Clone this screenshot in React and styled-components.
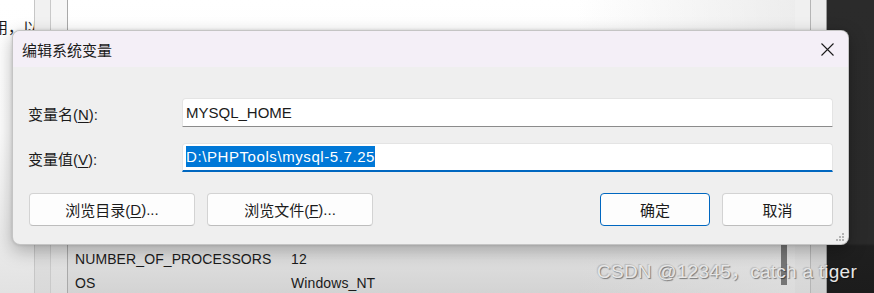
import React from 'react';
import styled, { createGlobalStyle } from 'styled-components';

const GlobalStyle = createGlobalStyle`
  html, body {
    margin: 0;
    padding: 0;
  }
  body {
    width: 874px;
    height: 293px;
    overflow: hidden;
    background: #2b2b2b;
    font-family: "Liberation Sans", "Noto Sans CJK SC", sans-serif;
    color: #1b1b1b;
  }
`;

const Screen = styled.div`
  position: relative;
  width: 874px;
  height: 293px;
  display: flex;
  overflow: hidden;
`;

/* ---- window behind the dialog ---- */

const SidePane = styled.div`
  width: 35px;
  flex: none;
  overflow: hidden;
  border-right: 1px solid #c6c6c6;
  background: linear-gradient(#ffffff 0, #fdfdfd 45%, #e2e2e2 100%);
  padding-top: 19px;
  box-sizing: border-box;
`;

const CutText = styled.div`
  margin-left: -7px;
  font-size: 15px;
  line-height: 18px;
  white-space: nowrap;
`;

const Strip = styled.div`
  width: ${p => p.$w}px;
  flex: none;
  box-sizing: border-box;
  border-right: 1px solid ${p => p.$line};
  background: linear-gradient(${p => p.$top} 0, ${p => p.$top} 40%, ${p => p.$bottom} 100%);
`;

const Main = styled.div`
  flex: 1;
  display: flex;
  background:
    linear-gradient(to right, rgba(255,255,255,0) 70%, rgba(225,225,225,0.6) 100%),
    linear-gradient(#ffffff 0, #fafafa 45%, #e6e6e6 80%, #d3d3d3 100%);
`;

const List = styled.div`
  flex: 1;
  padding: 223px 0 0 7px;
  font-size: 14px;
  letter-spacing: 0.1px;
`;

const Row = styled.div`
  display: flex;
  height: 24px;
  align-items: center;
  white-space: nowrap;
`;

const Name = styled.span`
  width: 216px;
  flex: none;
`;

const Track = styled.div`
  width: 14px;
  flex: none;
  display: flex;
  justify-content: flex-start;
`;

const Thumb = styled.div`
  width: 6px;
  height: 40px;
  margin-top: 245px;
  background: #767676;
`;

const Desktop = styled.div`
  width: 47px;
  flex: none;
  background: linear-gradient(#2b2b2b 0, #2a2a2a 83%, #1f1f1f 84%, #1c1c1c 100%);
`;

/* ---- dialog ---- */

const Dialog = styled.div`
  position: absolute;
  left: 12px;
  top: 30px;
  width: 837px;
  height: 215px;
  box-sizing: border-box;
  border-radius: 8px;
  overflow: hidden;
  background: #efefef;
  border: 1px solid rgba(0, 0, 0, 0.18);
  box-shadow: 0 6px 18px rgba(0, 0, 0, 0.28), 0 0 3px rgba(0, 0, 0, 0.15);
  display: flex;
  flex-direction: column;
`;

const TitleBar = styled.div`
  height: 36px;
  flex: none;
  display: flex;
  align-items: center;
  justify-content: space-between;
  padding: 0 14px 0 9px;
  background: #f4eff7;
  font-size: 15px;
`;

const CloseButton = styled.div`
  width: 14px;
  height: 14px;
  display: flex;
  align-items: center;
  justify-content: center;
`;

const Body = styled.div`
  flex: 1;
  padding: 31px 15px 0 15px;
`;

const Form = styled.div`
  display: grid;
  grid-template-columns: 154px 1fr;
  row-gap: 16px;
  align-items: center;
`;

const Label = styled.label`
  font-size: 15px;
  padding-top: 1px;
`;

const Key = styled.span`
  text-decoration: underline;
  text-underline-offset: 2px;
`;

const Field = styled.div`
  height: 29px;
  box-sizing: border-box;
  display: flex;
  align-items: center;
  padding: 0 3px;
  background: #ffffff;
  border: 1px solid #e4e4e4;
  border-bottom: ${p => (p.$focused ? '2px solid #0067c0' : '1px solid #8b8b8b')};
  border-radius: 4px 4px 0 0;
  font-size: 15px;
  white-space: nowrap;
`;

const Selected = styled.span`
  display: inline-block;
  height: 21px;
  line-height: 21px;
  margin-bottom: 1px;
  letter-spacing: 0.58px;
  background: #0078d7;
  color: #ffffff;
`;

const Buttons = styled.div`
  display: flex;
  gap: 12px;
  margin-top: 21px;
  padding-left: 1px;
`;

const Button = styled.div`
  width: ${p => p.$w}px;
  height: 33px;
  box-sizing: border-box;
  display: flex;
  align-items: center;
  justify-content: center;
  font-size: 15px;
  background: #fdfdfd;
  border: 1px solid ${p => (p.$primary ? '#0067c0' : '#d3d3d3')};
  border-bottom-color: ${p => (p.$primary ? '#0067c0' : '#bdbdbd')};
  border-radius: 4px;
  margin-left: ${p => (p.$push ? 'auto' : '0')};
`;

const Grip = styled.svg`
  position: absolute;
  right: 3px;
  bottom: 2px;
`;

const Watermark = styled.div`
  position: absolute;
  left: 597px;
  top: 261px;
  font-size: 19px;
  line-height: 22px;
  letter-spacing: 0.25px;
  color: #e6e6e6;
  white-space: nowrap;
  text-shadow: 1px 1px 1px rgba(0, 0, 0, 0.45), -1px -1px 1px rgba(0, 0, 0, 0.15);
`;

const App = () => {
  return (
    <Screen>
      <GlobalStyle />

      <SidePane>
        <CutText>用，以</CutText>
      </SidePane>
      <Strip $w={16} $line="#c9c9c9" $top="#f1f1f1" $bottom="#d9d9d9" />
      <Strip $w={17} $line="#a9a9a9" $top="#f6f6f6" $bottom="#dcdcdc" />
      <Main>
        <List>
          <Row>
            <Name>NUMBER_OF_...</Name>
            <span>(x)</span>
          </Row>
          <Row>
            <Name>NUMBER_OF_PROCESSORS</Name>
            <span>12</span>
          </Row>
          <Row>
            <Name>OS</Name>
            <span>Windows_NT</span>
          </Row>
        </List>
        <Track>
          <Thumb />
        </Track>
      </Main>
      <Strip $w={16} $line="#b5b5b5" $top="#f0f0f0" $bottom="#d7d7d7" />
      <Strip $w={16} $line="#9a9a9a" $top="#ececec" $bottom="#cfcfcf" />
      <Desktop />

      <Dialog>
        <TitleBar>
          <span>编辑系统变量</span>
          <CloseButton>
            <svg width="13" height="13" viewBox="0 0 13 13">
              <path d="M0.5 0.5 L12.5 12.5 M12.5 0.5 L0.5 12.5" stroke="#1b1b1b" strokeWidth="1.1" fill="none" />
            </svg>
          </CloseButton>
        </TitleBar>

        <Body>
          <Form>
            <Label>变量名(<Key>N</Key>):</Label>
            <Field>MYSQL_HOME</Field>
            <Label>变量值(<Key>V</Key>):</Label>
            <Field $focused>
              <Selected>D:\PHPTools\mysql-5.7.25</Selected>
            </Field>
          </Form>

          <Buttons>
            <Button $w={166}>浏览目录(<Key>D</Key>)...</Button>
            <Button $w={166}>浏览文件(<Key>F</Key>)...</Button>
            <Button $w={110} $primary $push>确定</Button>
            <Button $w={111}>取消</Button>
          </Buttons>
        </Body>

        <Grip width="10" height="10" viewBox="0 0 10 10">
          <rect x="7" y="1" width="2" height="2" fill="#b4b4b4" />
          <rect x="4" y="4" width="2" height="2" fill="#b4b4b4" />
          <rect x="7" y="4" width="2" height="2" fill="#b4b4b4" />
          <rect x="1" y="7" width="2" height="2" fill="#b4b4b4" />
          <rect x="4" y="7" width="2" height="2" fill="#b4b4b4" />
          <rect x="7" y="7" width="2" height="2" fill="#b4b4b4" />
        </Grip>
      </Dialog>

      <Watermark>CSDN @12345，catch a tiger</Watermark>
    </Screen>
  );
};

export default App;
